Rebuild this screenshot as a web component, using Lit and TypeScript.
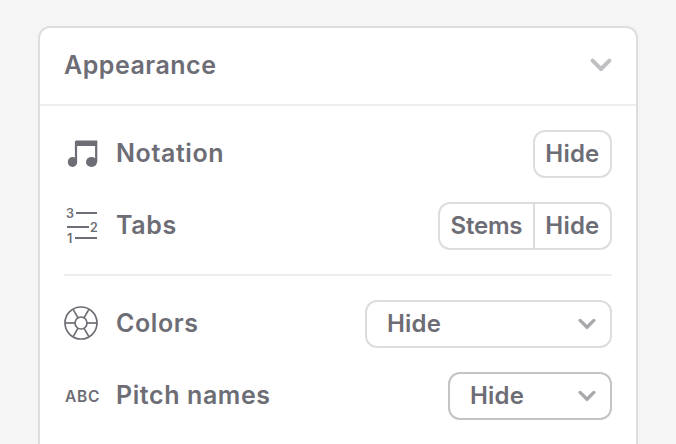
import { css, html, LitElement, svg } from "lit";
import { customElement } from "lit/decorators.js";

const chevron = html`<svg class="chevron" width="22" height="14" viewBox="0 0 22 14">
  <path d="M2.6 2.6 L11 11 L19.4 2.6" fill="none" stroke="currentColor" stroke-width="4" stroke-linecap="round" stroke-linejoin="round" />
</svg>`;

const noteIcon = html`<svg width="36" height="32" viewBox="0 0 36 32">
  <path d="M12 3.5 H32.2 V24 M12 24 V3.5" fill="none" stroke="#6d6d75" stroke-width="2.2" />
  <rect x="11" y="3" width="22" height="5" fill="#6d6d75" />
  <ellipse cx="8.5" cy="24" rx="4.7" ry="5" fill="#6d6d75" />
  <ellipse cx="27.5" cy="24" rx="5.5" ry="5" fill="#6d6d75" />
</svg>`;

const tabsIcon = html`<svg width="36" height="44" viewBox="0 -4 36 44">
  <path d="M12 5 H33 M3 19 H25 M11 30 H33" stroke="#6d6d75" stroke-width="1.8" />
  <text x="2" y="10" class="digit">3</text>
  <text x="26" y="23.5" class="digit">2</text>
  <text x="3" y="34.5" class="digit">1</text>
</svg>`;

const spokes = [30, 90, 150, 210, 270, 330];
const wheelIcon = html`<svg width="36" height="36" viewBox="0 0 36 36" fill="none" stroke="#6d6d75" stroke-width="1.7">
  <circle cx="17" cy="17" r="16" />
  <circle cx="17" cy="17" r="6" />
  ${spokes.map((a) => {
    const r = (a * Math.PI) / 180;
    return svg`<line x1=${17 + 6 * Math.sin(r)} y1=${17 - 6 * Math.cos(r)} x2=${17 + 16 * Math.sin(r)} y2=${17 - 16 * Math.cos(r)} />`;
  })}
</svg>`;

@customElement("app-root")
export class AppRoot extends LitElement {
  static styles = css`
    :host {
      display: block;
      height: 444px;
      overflow: hidden;
      background: #f5f5f5;
      font-family: "Inter", "Liberation Sans", sans-serif;
      color: #6d6d75;
      padding: 26px 38px 0;
      box-sizing: border-box;
    }
    .card {
      background: #fff;
      border: 2px solid #ddd;
      border-radius: 12px;
      height: 440px;
      box-sizing: border-box;
    }
    .head {
      height: 78px;
      box-sizing: border-box;
      display: flex;
      align-items: center;
      justify-content: space-between;
      padding: 0 24px;
      border-bottom: 2px solid #eee;
      font-size: 25px;
      font-weight: 570;
      letter-spacing: 0.5px;
    }
    .head .chevron {
      color: #c0c0c4;
      margin-bottom: 2px;
    }
    .text {
      padding-bottom: 2px;
    }
    .body {
      padding: 24px 24px 0;
    }
    .group {
      display: flex;
      flex-direction: column;
      gap: 24px;
    }
    .divider {
      height: 2px;
      background: #eee;
      margin: 24px 0;
    }
    .row {
      height: 48px;
      display: flex;
      align-items: center;
      justify-content: space-between;
    }
    .label {
      display: flex;
      align-items: center;
      font-size: 25px;
      font-weight: 570;
      letter-spacing: 0.6px;
    }
    .icon {
      width: 52px;
      height: 36px;
      display: flex;
      align-items: center;
      letter-spacing: 0;
    }
    .abc {
      font-size: 15.5px;
      font-weight: 600;
      letter-spacing: 0.7px;
      box-sizing: border-box;
      padding-left: 1px;
    }
    .digit {
      font: 600 12.5px "Inter", sans-serif;
      fill: #6d6d75;
    }
    .buttons {
      display: flex;
      height: 48px;
      box-sizing: border-box;
      border: 2px solid #ddd;
      border-radius: 12px;
      font-size: 24px;
      font-weight: 570;
      letter-spacing: 0.2px;
    }
    .buttons span {
      display: flex;
      align-items: center;
      padding: 0 10.5px 2px;
    }
    .buttons .stems {
      letter-spacing: -0.2px;
    }
    .buttons span + span {
      border-left: 2px solid #ddd;
    }
    .select {
      height: 48px;
      box-sizing: border-box;
      border: 2px solid #ddd;
      border-radius: 12px;
      display: flex;
      align-items: center;
      justify-content: space-between;
      padding: 0 14px 0 20px;
      font-size: 24px;
      font-weight: 570;
      letter-spacing: 0.2px;
    }
    .select .chevron {
      color: #a8a8ac;
      width: 18px;
      height: 12px;
    }
    .wide {
      width: 247px;
    }
    .narrow {
      width: 164px;
      border-color: #c4c4c4;
    }
  `;

  render() {
    return html`
      <div class="card">
        <div class="head"><span class="text">Appearance</span>${chevron}</div>
        <div class="body">
          <div class="group">
            <div class="row">
              <div class="label"><span class="icon">${noteIcon}</span><span class="text">Notation</span></div>
              <div class="buttons"><span>Hide</span></div>
            </div>
            <div class="row">
              <div class="label"><span class="icon">${tabsIcon}</span><span class="text">Tabs</span></div>
              <div class="buttons"><span class="stems">Stems</span><span>Hide</span></div>
            </div>
          </div>
          <div class="divider"></div>
          <div class="group">
            <div class="row">
              <div class="label"><span class="icon">${wheelIcon}</span><span class="text">Colors</span></div>
              <div class="select wide"><span class="text">Hide</span>${chevron}</div>
            </div>
            <div class="row">
              <div class="label"><span class="icon abc">ABC</span><span class="text">Pitch names</span></div>
              <div class="select narrow"><span class="text">Hide</span>${chevron}</div>
            </div>
          </div>
        </div>
      </div>
    `;
  }
}
